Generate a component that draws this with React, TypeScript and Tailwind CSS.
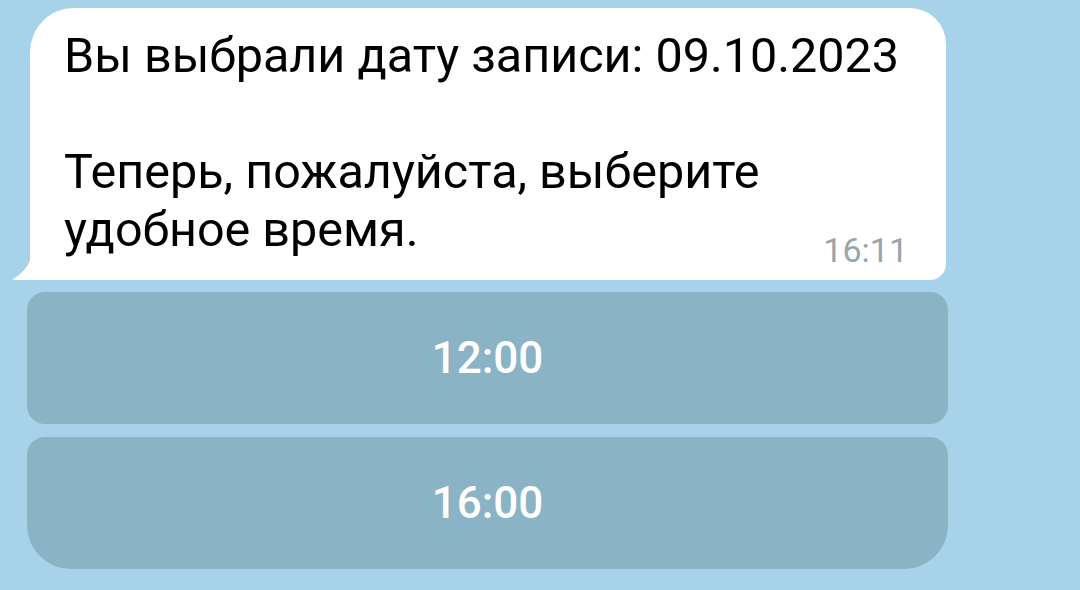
export default function App() {
  return (
    <div className="w-[1080px] h-[590px] bg-[#a6d2ea] overflow-hidden pt-[8px] pl-[27px]" style={{ fontFamily: "Roboto, 'Noto Sans', sans-serif" }}>
      <div className="relative ml-[3px] w-[916px] h-[272px] bg-white rounded-tl-[44px] rounded-tr-[36px] rounded-br-[16px] rounded-bl-none pl-[34px] pt-[19px]">
        <svg className="absolute left-[-18px] bottom-0" width="20" height="22" viewBox="0 0 20 22">
          <path d="M19 0 L19 22 L2 22 Q0 22 1 21 Q14 14 19 0 Z" fill="#ffffff" />
        </svg>
        <div className="text-[48.5px] leading-[58px] text-black">
          <div>Вы выбрали дату записи: 09.10.2023</div>
          <div className="h-[58px]"></div>
          <div>Теперь, пожалуйста, выберите</div>
          <div>удобное время.</div>
        </div>
        <div className="absolute right-[38px] bottom-[13px] text-[34px] leading-none text-[#9aa5ab]">16:11</div>
      </div>
      <div className="mt-[12px] w-[921px] flex flex-col gap-[13px]">
        <div className="h-[132px] bg-[#8ab3c6] rounded-[18px] flex items-center justify-center text-white text-[44px] font-medium">12:00</div>
        <div className="h-[132px] bg-[#8ab3c6] rounded-t-[18px] rounded-b-[44px] flex items-center justify-center text-white text-[44px] font-medium">16:00</div>
      </div>
    </div>
  );
}
